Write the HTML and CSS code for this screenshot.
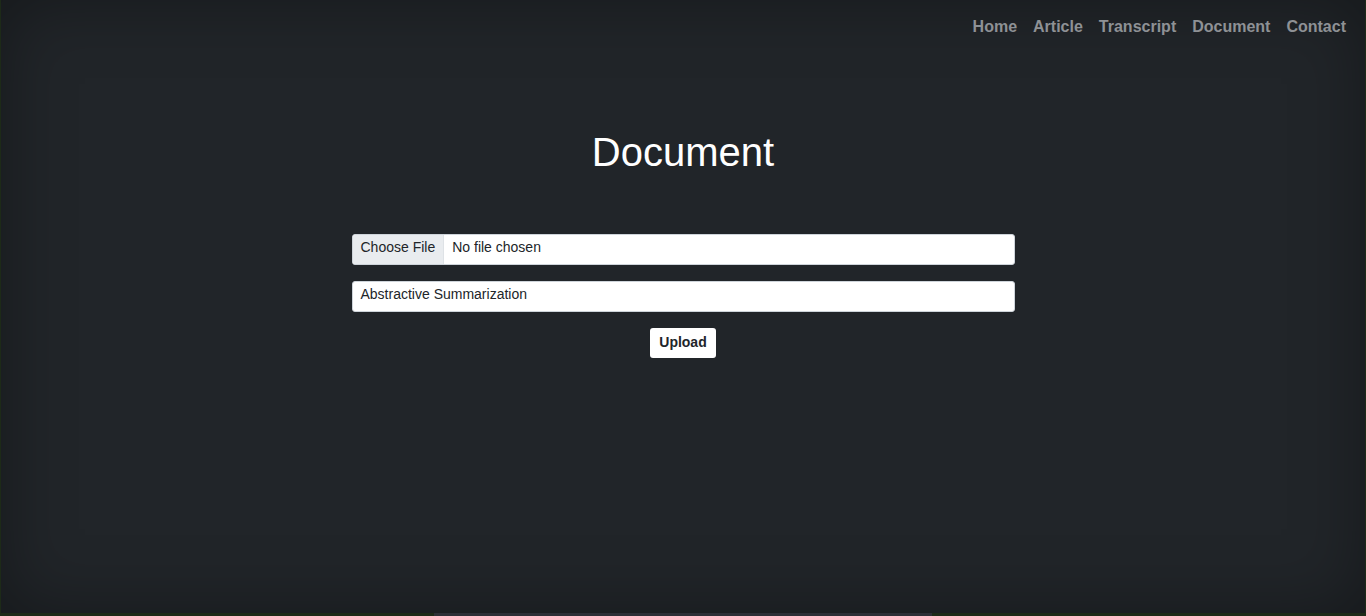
FILE: index.html
```html
<!DOCTYPE html>
<html lang="en">
<head>
<meta charset="utf-8">
<title>Document</title>
<link rel="stylesheet" href="styles.css">
</head>
<body>
<div class="page">
  <nav class="nav">
    <a href="#">Home</a>
    <a href="#">Article</a>
    <a href="#">Transcript</a>
    <a href="#">Document</a>
    <a href="#">Contact</a>
  </nav>
  <main class="main">
    <h1 class="title">Document</h1>
    <form class="form">
      <div class="file">
        <span class="file-btn">Choose File</span>
        <span class="file-name">No file chosen</span>
      </div>
      <div class="select">Abstractive Summarization</div>
      <div class="actions"><button type="button" class="upload">Upload</button></div>
    </form>
  </main>
  <div class="scrollbar"></div>
</div>
</body>
</html>
```

FILE: styles.css
```css
* { box-sizing: border-box; }
html, body { margin: 0; padding: 0; height: 100%; }
body {
  background: #1d2a18;
  font-family: "Liberation Sans", Arial, sans-serif;
  overflow: hidden;
}
.page {
  position: relative;
  height: 616px;
  margin: 0 1px;
  background: #212529;
  box-shadow: inset 0 0 70px rgba(0,0,0,0.35);
  border-bottom: 3px solid #1d2a18;
  display: flex;
  flex-direction: column;
}
.nav {
  display: flex;
  justify-content: flex-end;
  gap: 16px;
  padding: 18px 19px 0 0;
  height: 45px;
}
.nav a {
  color: #8e9195;
  text-decoration: none;
  font-weight: 700;
  font-size: 16px;
  line-height: 18px;
}
.main {
  display: flex;
  flex-direction: column;
  align-items: center;
}
.title {
  margin: 83px 0 0;
  font-size: 40px;
  font-weight: 400;
  line-height: 48px;
  color: #ffffff;
}
.form {
  width: 663px;
  margin-top: 58px;
  display: flex;
  flex-direction: column;
  gap: 16px;
}
.file, .select {
  height: 31px;
  background: #fff;
  border: 1px solid #ced4da;
  border-radius: 3px;
  display: flex;
  align-items: stretch;
  font-size: 14px;
  color: #212529;
  overflow: hidden;
}
.file-btn {
  background: #e9ecef;
  border-right: 1px solid #dee2e6;
  padding: 4px 8px 0;
}
.file-name { padding: 4px 8px 0; }
.select { padding: 4px 8px 0; }
.actions {
  display: flex;
  justify-content: center;
}
.upload {
  background: #fff;
  border: 0;
  border-radius: 3px;
  width: 66px;
  height: 30px;
  font-family: "Liberation Sans", Arial, sans-serif;
  font-weight: 700;
  font-size: 14px;
  color: #212529;
  padding: 0 0 3px;
}
.scrollbar {
  position: absolute;
  left: 433px;
  bottom: -3px;
  width: 498px;
  height: 3px;
  background: #2c2f36;
}
```
